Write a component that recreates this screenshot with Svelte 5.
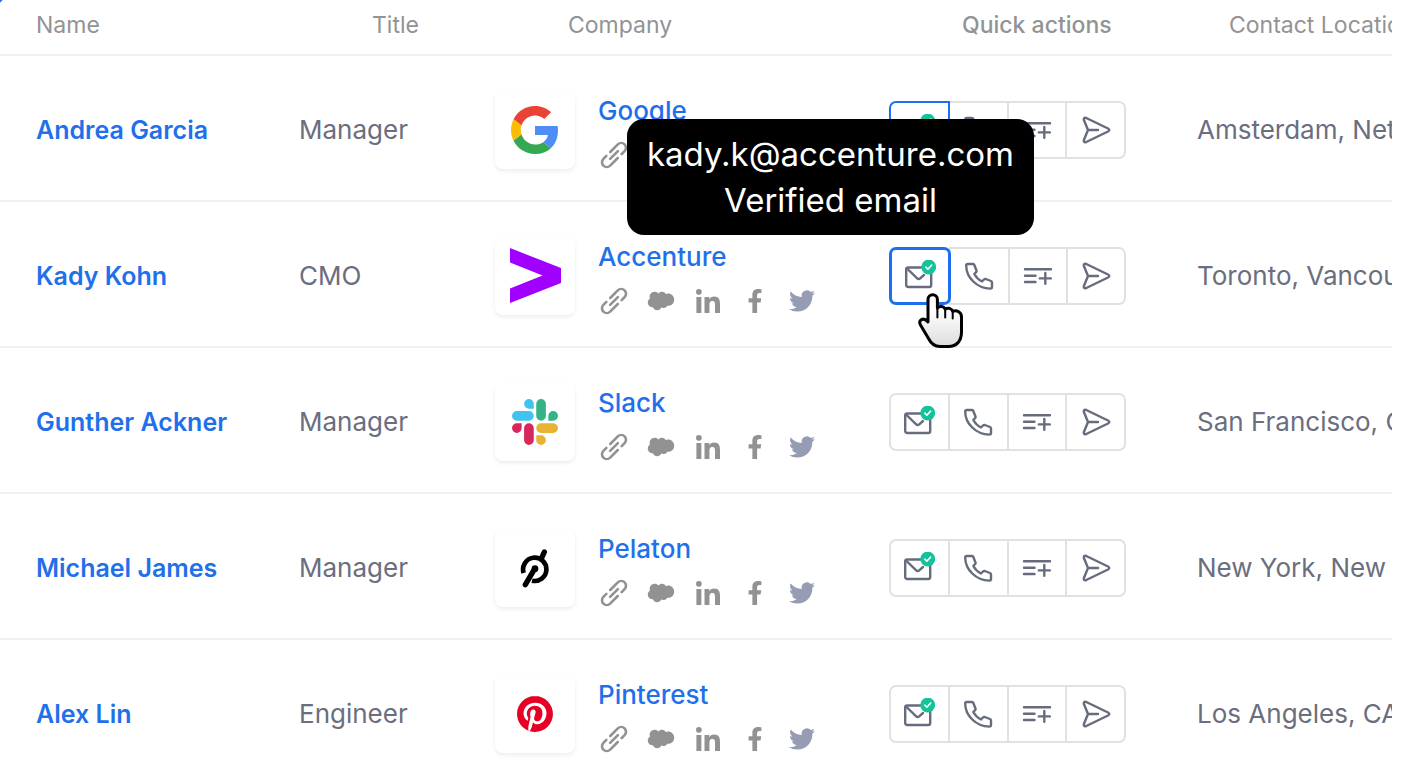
<script>
  const contacts = [
    { name: 'Andrea Garcia', title: 'Manager', company: 'Google', location: 'Amsterdam, Netherlands' },
    { name: 'Kady Kohn', title: 'CMO', company: 'Accenture', location: 'Toronto, Vancouver' },
    { name: 'Gunther Ackner', title: 'Manager', company: 'Slack', location: 'San Francisco, CA' },
    { name: 'Michael James', title: 'Manager', company: 'Pelaton', location: 'New York, New York' },
    { name: 'Alex Lin', title: 'Engineer', company: 'Pinterest', location: 'Los Angeles, CA' }
  ];

  let hovered = $state('Kady Kohn');
  let focused = $state('Andrea Garcia');
</script>

{#snippet logo(company)}
  {#if company === 'Google'}
    <svg width="48" height="48" viewBox="0 0 48 48">
      <path fill="#EA4335" d="M24 9.5c3.54 0 6.71 1.22 9.21 3.6l6.85-6.85C35.9 2.38 30.47 0 24 0 14.62 0 6.51 5.38 2.56 13.22l7.98 6.19C12.43 13.72 17.74 9.5 24 9.5z" />
      <path fill="#4E8DF5" d="M46.98 24.55c0-1.57-.15-3.09-.38-4.55H24v9.02h12.94c-.58 2.96-2.26 5.48-4.78 7.18l7.73 6c4.51-4.18 7.09-10.36 7.09-17.65z" />
      <path fill="#FBBC05" d="M10.53 28.59c-.48-1.45-.76-2.99-.76-4.59s.27-3.14.76-4.59l-7.98-6.19C.92 16.46 0 20.12 0 24c0 3.88.92 7.54 2.56 10.78l7.97-6.19z" />
      <path fill="#34A853" d="M24 48c6.48 0 11.93-2.13 15.89-5.81l-7.73-6c-2.15 1.45-4.92 2.3-8.16 2.3-6.26 0-11.57-4.22-13.47-9.91l-7.98 6.19C6.51 42.62 14.62 48 24 48z" />
    </svg>
  {:else if company === 'Accenture'}
    <svg width="51" height="55" viewBox="0 0 152 164">
      <path fill="#a100ff" d="M0 0 152 60v44L0 164v-43l97-39L0 43z" />
    </svg>
  {:else if company === 'Slack'}
    <svg width="46" height="46" viewBox="0 0 24 24">
      <path fill="#d9265b" d="M5.042 15.165a2.528 2.528 0 0 1-2.52 2.523A2.528 2.528 0 0 1 0 15.165a2.527 2.527 0 0 1 2.522-2.52h2.52v2.52zM6.313 15.165a2.527 2.527 0 0 1 2.521-2.52 2.527 2.527 0 0 1 2.521 2.52v6.313A2.528 2.528 0 0 1 8.834 24a2.528 2.528 0 0 1-2.521-2.522v-6.313z" />
      <path fill="#40c4ef" d="M8.834 5.042a2.528 2.528 0 0 1-2.521-2.52A2.528 2.528 0 0 1 8.834 0a2.528 2.528 0 0 1 2.521 2.522v2.52H8.834zM8.834 6.313a2.528 2.528 0 0 1 2.521 2.521 2.528 2.528 0 0 1-2.521 2.521H2.522A2.528 2.528 0 0 1 0 8.834a2.528 2.528 0 0 1 2.522-2.521h6.312z" />
      <path fill="#34b485" d="M18.956 8.834a2.528 2.528 0 0 1 2.522-2.521A2.528 2.528 0 0 1 24 8.834a2.528 2.528 0 0 1-2.522 2.521h-2.522V8.834zM17.688 8.834a2.528 2.528 0 0 1-2.523 2.521 2.527 2.527 0 0 1-2.52-2.521V2.522A2.527 2.527 0 0 1 15.165 0a2.528 2.528 0 0 1 2.523 2.522v6.312z" />
      <path fill="#e7b235" d="M15.165 18.956a2.528 2.528 0 0 1 2.523 2.522A2.528 2.528 0 0 1 15.165 24a2.527 2.527 0 0 1-2.52-2.522v-2.522h2.52zM15.165 17.688a2.527 2.527 0 0 1-2.52-2.523 2.526 2.526 0 0 1 2.52-2.52h6.313A2.527 2.527 0 0 1 24 15.165a2.528 2.528 0 0 1-2.522 2.523h-6.313z" />
    </svg>
  {:else if company === 'Pelaton'}
    <svg width="30" height="40" viewBox="0 0 90 120" fill="none" stroke="#000">
      <path stroke-width="14" d="M11 75A35 35 0 1 1 36 98" />
      <path stroke-width="16" stroke-linecap="round" d="M43 64 16 110M64 32l9-20" />
      <circle cx="45" cy="62" r="10" fill="#000" stroke="none" />
    </svg>
  {:else}
    <svg width="36" height="36" viewBox="0 0 24 24">
      <path fill="#e60023" d="M12.017 0C5.396 0 .029 5.367.029 11.987c0 5.079 3.158 9.417 7.618 11.162-.105-.949-.199-2.403.041-3.439.219-.937 1.406-5.957 1.406-5.957s-.359-.72-.359-1.781c0-1.663.967-2.911 2.168-2.911 1.024 0 1.518.769 1.518 1.688 0 1.029-.653 2.567-.992 3.992-.285 1.193.6 2.165 1.775 2.165 2.128 0 3.768-2.245 3.768-5.487 0-2.861-2.063-4.869-5.008-4.869-3.41 0-5.409 2.562-5.409 5.199 0 1.033.394 2.143.889 2.741.099.12.112.225.085.345-.09.375-.293 1.199-.334 1.363-.053.225-.172.271-.401.165-1.495-.69-2.433-2.878-2.433-4.646 0-3.776 2.748-7.252 7.92-7.252 4.158 0 7.392 2.967 7.392 6.923 0 4.135-2.607 7.462-6.233 7.462-1.214 0-2.354-.629-2.758-1.379l-.749 2.848c-.269 1.045-1.004 2.352-1.498 3.146 1.123.345 2.306.535 3.55.535 6.607 0 11.985-5.365 11.985-11.987C23.97 5.39 18.592.026 11.985.026L12.017 0z" />
    </svg>
  {/if}
{/snippet}

<div class="panel">
  <table>
    <colgroup>
      <col class="col-name" />
      <col class="col-title" />
      <col class="col-company" />
      <col class="col-actions" />
      <col />
    </colgroup>
    <thead>
      <tr>
        <th class="first">Name</th>
        <th>Title</th>
        <th>Company</th>
        <th class="strong">Quick actions</th>
        <th class="last">Contact Location</th>
      </tr>
    </thead>
    <tbody>
      {#each contacts as contact (contact.name)}
        <tr>
          <td class="first"><a class="name" href="#contact">{contact.name}</a></td>
          <td>{contact.title}</td>
          <td>
            <div class="company">
              <div class="logo">{@render logo(contact.company)}</div>
              <div class="details">
                <a class="company-name" href="#company">{contact.company}</a>
                <div class="links">
                  <a href="#website" aria-label="Website">
                    <svg width="28" height="28" viewBox="-14 -14 28 28" fill="none" stroke="currentColor" stroke-width="2.6" stroke-linecap="round">
                      <path transform="rotate(-45)" d="M-.5-4.8H10.2a4.8 4.8 0 0 1 0 9.600H6M.5 4.800H-10.200a4.800 4.800 0 0 1 0-9.600H-6M-5.500 0H5.500" />
                    </svg>
                  </a>
                  <a href="#salesforce" aria-label="Salesforce">
                    <svg width="28" height="28" viewBox="0 0 28 28" fill="currentColor">
                      <path d="M11.600 6.500C13.300 4 17.300 4.200 18.700 7 22.800 5.200 27.200 8.300 27.200 12.500 27.200 16.700 24 19.400 20.300 18.700 19.200 21 16.400 21.600 14.300 20.600 12.500 24.200 7.400 24 5.900 20.200 2.800 20.500.800 18.200.800 15.500.800 13.800 1.700 12.300 3 11.400 1 6 8 2.500 11.600 6.500z" />
                    </svg>
                  </a>
                  <a href="#linkedin" aria-label="LinkedIn">
                    <svg width="24" height="24" viewBox="0 0 448 448" fill="currentColor">
                      <path d="M100.28 448H7.4V148.9h92.88zM53.79 108.1C24.09 108.1 0 83.5 0 53.8a53.79 53.79 0 0 1 107.58 0c0 29.7-24.1 54.3-53.79 54.3zM447.9 448h-92.68V302.4c0-34.7-.7-79.2-48.29-79.2-48.29 0-55.69 37.7-55.69 76.7V448h-92.78V148.9h89.08v40.8h1.3c12.4-23.5 42.69-48.3 87.88-48.3 94 0 111.28 61.9 111.28 142.3V448z" />
                    </svg>
                  </a>
                  <a href="#facebook" aria-label="Facebook">
                    <svg width="16" height="24" viewBox="0 0 320 512" fill="currentColor">
                      <path d="M279.14 288l14.22-92.66h-88.91v-60.13c0-25.35 12.42-50.06 52.24-50.06h40.42V6.26S260.43 0 225.36 0c-73.22 0-121.08 44.38-121.08 124.72v70.62H22.89V288h81.39v224h100.17V288z" />
                    </svg>
                  </a>
                  <a class="twitter" href="#twitter" aria-label="Twitter">
                    <svg width="26" height="26" viewBox="0 0 24 24" fill="currentColor">
                      <path d="M23.953 4.57a10 10 0 01-2.825.775 4.958 4.958 0 002.163-2.723c-.951.555-2.005.959-3.127 1.184a4.92 4.92 0 00-8.384 4.482C7.69 8.095 4.067 6.13 1.64 3.162a4.822 4.822 0 00-.666 2.475c0 1.71.87 3.213 2.188 4.096a4.904 4.904 0 01-2.228-.616v.06a4.923 4.923 0 003.946 4.827 4.996 4.996 0 01-2.212.085 4.936 4.936 0 004.604 3.417 9.867 9.867 0 01-6.102 2.105c-.39 0-.779-.023-1.17-.067a13.995 13.995 0 007.557 2.209c9.053 0 13.998-7.496 13.998-13.985 0-.21 0-.42-.015-.63A9.935 9.935 0 0024 4.59z" />
                    </svg>
                  </a>
                </div>
              </div>
            </div>
          </td>
          <td>
            <div class="actions">
              <button
                aria-label="Email"
                class:focused={focused === contact.name}
                class:hovered={hovered === contact.name}
                onclick={() => (focused = contact.name)}
                onmouseenter={() => (hovered = contact.name)}
              >
                <svg width="32" height="32" viewBox="0 0 32 32">
                  <rect x="2.2" y="7.5" width="25" height="19.5" rx="2" />
                  <path d="M3 8.5 13.2 18.4q1.5 1.4 3 0L20 15" />
                  <circle class="badge" cx="24.7" cy="7" r="7.4" />
                  <path class="check" d="m21.8 7.2 2.1 2 3.8-4.2" />
                </svg>
              </button>
              <button aria-label="Call">
                <svg width="32" height="32" viewBox="0 0 32 32">
                  <path d="M4.7 4H10q1 0 1.3 1l2.2 5.5q.4 1-.4 1.7L11.3 14q2.7 5 7.7 7.5l2-2q.8-.8 1.8-.5L28 21q1 .4 1 1.4V27q0 1.6-1.6 1.6C14 28.5 3.2 17.5 3.2 5.5Q3.2 4 4.7 4z" />
                </svg>
              </button>
              <button aria-label="Add to list">
                <svg width="32" height="32" viewBox="0 0 32 32">
                  <path d="M3 9.2h26M3 15.7h10.5M3 22h10.5M17.8 18.4h11M23.3 13v10.8" />
                </svg>
              </button>
              <button aria-label="Send">
                <svg width="32" height="32" viewBox="0 0 32 32">
                  <path d="M6.3 4 28 14.500q2.600 1.500 0 3L6.300 28q-2.800 1-2.500-1.800L8 16 3.800 5.800Q3.500 3 6.300 4zM8 16h10" />
                </svg>
              </button>
              {#if hovered === contact.name}
                <div class="tooltip" role="tooltip">
                  <span>kady.k@accenture.com</span>
                  <span>Verified email</span>
                </div>
                <svg class="cursor" width="46" height="56" viewBox="0 0 46 56">
                  <defs>
                    <linearGradient id="hand" x1="0" y1="0" x2="0" y2="1">
                      <stop offset="0.3" stop-color="#fff" />
                      <stop offset="1" stop-color="#dcdcdc" />
                    </linearGradient>
                  </defs>
                  <path fill="url(#hand)" stroke="#000" stroke-width="3" stroke-linejoin="round" d="M10 29V6.5a4.7 4.7 0 0 1 9.4 0V15c2-2.5 6.5-2 7.8 1.2 2.5-2 6.5-.8 7.5 2C39 17 43.5 19 43.5 24v15c0 9-5 14.5-13 14.5H22c-6 0-9-3-11.5-8L2.500 32C0 27 5 23.500 10 29z" />
                  <path fill="none" stroke="#000" stroke-width="2" stroke-linecap="round" d="M19.400 15v9.500M27.200 16.500v8M34.700 18.500v7" />
                </svg>
              {/if}
            </div>
          </td>
          <td class="location">{contact.location}</td>
        </tr>
      {/each}
    </tbody>
  </table>
</div>

<style>
  :global(body) {
    margin: 0;
    background: #fff;
    font-family: Inter, 'Liberation Sans', sans-serif;
  }

  .panel {
    position: relative;
    margin-right: 16px;
    overflow: hidden;
  }

  .panel::before {
    content: '';
    position: absolute;
    top: 0;
    left: 0;
    width: 8px;
    height: 8px;
    background: radial-gradient(circle at 100% 100%, transparent 9px, #1d6ff2 10px);
  }

  table {
    width: 100%;
    table-layout: fixed;
    border-collapse: separate;
    border-spacing: 0;
  }

  .col-name {
    width: 299px;
  }

  .col-title {
    width: 196px;
  }

  .col-company {
    width: 394px;
  }

  .col-actions {
    width: 308px;
  }

  th,
  td {
    padding: 0;
    border-bottom: 2px solid #eef0f1;
    text-align: left;
    white-space: nowrap;
  }

  th {
    box-sizing: border-box;
    height: 56px;
    padding: 0 0 5px 73px;
    color: #929395;
    font-size: 23px;
    font-weight: 400;
  }

  th.strong {
    font-weight: 500;
  }

  th.last {
    padding-left: 32px;
  }

  th.first,
  td.first {
    padding-left: 36px;
  }

  td {
    box-sizing: border-box;
    height: 146px;
    padding-top: 3px;
    color: #6a6e7e;
    font-size: 26px;
  }

  a {
    color: #1f70ea;
    text-decoration: none;
  }

  .name {
    font-size: 25px;
    font-weight: 600;
  }

  .company {
    display: flex;
    align-items: center;
    gap: 23px;
  }

  .logo {
    display: flex;
    align-items: center;
    justify-content: center;
    width: 80px;
    height: 78px;
    border-radius: 8px;
    box-shadow: 0 2px 4px rgba(0, 0, 0, 0.08);
  }

  .details {
    display: flex;
    flex-direction: column;
    gap: 14px;
    padding-top: 5px;
  }

  .company-name {
    font-weight: 500;
    line-height: 32px;
  }

  .links {
    display: flex;
    gap: 19px;
    padding-left: 2px;
  }

  .links a {
    display: flex;
    align-items: center;
    justify-content: center;
    width: 28px;
    height: 28px;
    color: #929292;
  }

  .links a.twitter {
    color: #959cb3;
  }

  .actions {
    position: relative;
    display: flex;
    width: 237px;
  }

  .actions button {
    display: flex;
    flex: 1;
    align-items: center;
    justify-content: center;
    height: 58px;
    margin: 0 0 0 -2px;
    padding: 0;
    border: 2px solid #dfe2e5;
    background: #fff;
    cursor: pointer;
  }

  .actions button:first-child {
    margin-left: 0;
    border-radius: 7px 0 0 7px;
  }

  .actions button:nth-child(4) {
    border-radius: 0 7px 7px 0;
  }

  .actions button.focused,
  .actions button.hovered {
    z-index: 1;
    border-color: #1d6ff2;
  }

  .actions button.hovered {
    border-width: 3px;
    border-radius: 7px;
  }

  .actions button svg {
    flex: none;
    fill: none;
    stroke: #676b7e;
    stroke-width: 2.4;
    stroke-linecap: round;
    stroke-linejoin: round;
  }

  .actions .badge {
    fill: #15c39a;
    stroke: none;
  }

  .actions .check {
    stroke: #fff;
    stroke-width: 1.6;
  }

  .tooltip {
    position: absolute;
    right: 92px;
    bottom: 70px;
    z-index: 2;
    display: flex;
    flex-direction: column;
    align-items: center;
    padding: 12px 20px;
    border-radius: 17px;
    background: #000;
    color: #fff;
    font-size: 33px;
    line-height: 46px;
  }

  .cursor {
    position: absolute;
    top: 46px;
    left: 29px;
    z-index: 2;
  }

  .location {
    overflow: hidden;
  }
</style>
